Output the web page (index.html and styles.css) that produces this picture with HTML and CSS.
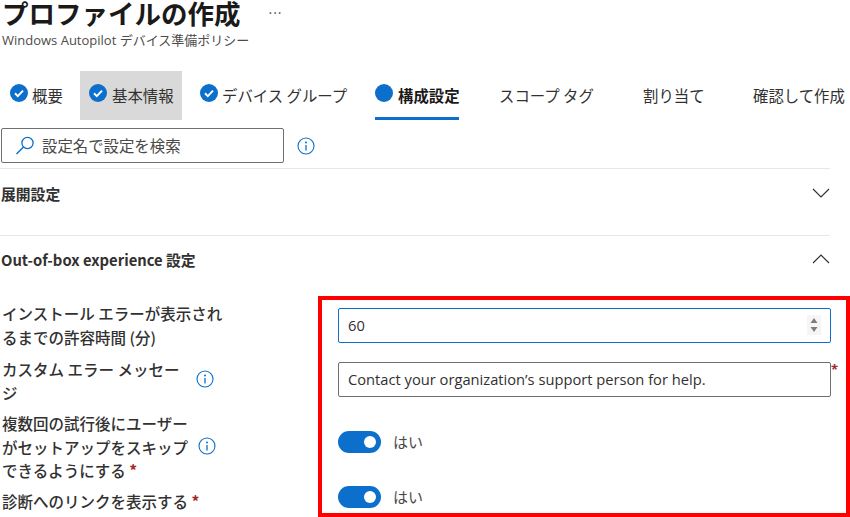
FILE: index.html
```html
<!DOCTYPE html>
<html lang="ja">
<head>
<meta charset="utf-8">
<title>プロファイルの作成</title>
<link rel="stylesheet" href="styles.css">
</head>
<body>
<div class="page">
  <header class="head">
    <div class="title-row"><h1>プロファイルの作成</h1><span class="more">···</span></div>
    <div class="sub">Windows Autopilot デバイス準備ポリシー</div>
  </header>
  <nav class="tabs">
    <div class="tab t1"><svg class="ck" viewBox="0 0 18 18"><circle cx="9" cy="9" r="9" fill="#0b6fcb"/><path d="M5 9.3l2.8 2.8L13 6.6" fill="none" stroke="#fff" stroke-width="2"/></svg><span>概要</span></div>
    <div class="tab t2 hover"><svg class="ck" viewBox="0 0 18 18"><circle cx="9" cy="9" r="9" fill="#0b6fcb"/><path d="M5 9.3l2.8 2.8L13 6.6" fill="none" stroke="#fff" stroke-width="2"/></svg><span>基本情報</span></div>
    <div class="tab t3"><svg class="ck" viewBox="0 0 18 18"><circle cx="9" cy="9" r="9" fill="#0b6fcb"/><path d="M5 9.3l2.8 2.8L13 6.6" fill="none" stroke="#fff" stroke-width="2"/></svg><span>デバイス グループ</span></div>
    <div class="tab t4 active"><span class="dot"></span><span>構成設定</span></div>
    <div class="tab t5"><span>スコープ タグ</span></div>
    <div class="tab t6"><span>割り当て</span></div>
    <div class="tab t7"><span>確認して作成</span></div>
  </nav>
  <div class="search-row">
    <div class="search">
      <svg class="mag" viewBox="0 0 20 20"><circle cx="12.5" cy="7" r="5.6" fill="none" stroke="#0b6fcb" stroke-width="1.3"/><path d="M8.5 11L1.5 18" stroke="#0b6fcb" stroke-width="1.5" fill="none"/></svg>
      <span>設定名で設定を検索</span>
    </div>
    <svg class="info" viewBox="0 0 18 18"><circle cx="9" cy="9" r="8" fill="none" stroke="#0b6fcb" stroke-width="1.1"/><circle cx="9" cy="5.5" r="1" fill="#0b6fcb"/><path d="M9 8v5.5" stroke="#0b6fcb" stroke-width="1.3"/></svg>
  </div>
  <section class="acc acc1">
    <span>展開設定</span>
    <svg class="chev" viewBox="0 0 18 10"><path d="M1 1l8 8 8-8" fill="none" stroke="#333" stroke-width="1.2"/></svg>
  </section>
  <section class="acc acc2">
    <span>Out-of-box experience 設定</span>
    <svg class="chev" viewBox="0 0 18 10"><path d="M1 9l8-8 8 8" fill="none" stroke="#333" stroke-width="1.2"/></svg>
  </section>
  <div class="form">
    <div class="row r1">
      <div class="label">インストール エラーが表示されるまでの許容時間 (分)</div>
      <div class="field num"><span>60</span><svg class="spin" viewBox="0 0 14 20"><rect width="14" height="20" fill="#f5f5f5"/><path d="M7 3l3.500 5h-7z M3.500 12h7l-3.500 5z" fill="#7d7d7d"/></svg></div>
    </div>
    <div class="row r2">
      <div class="label">カスタム エラー メッセージ</div>
      <svg class="info" viewBox="0 0 18 18"><circle cx="9" cy="9" r="8" fill="none" stroke="#0b6fcb" stroke-width="1.1"/><circle cx="9" cy="5.500" r="1" fill="#0b6fcb"/><path d="M9 8v5.500" stroke="#0b6fcb" stroke-width="1.3"/></svg>
      <div class="field text"><span>Contact your organization’s support person for help.</span><b class="req">*</b></div>
    </div>
    <div class="row r3">
      <div class="label">複数回の試行後にユーザーがセットアップをスキップできるようにする <b class="req">*</b></div>
      <svg class="info" viewBox="0 0 18 18"><circle cx="9" cy="9" r="8" fill="none" stroke="#0b6fcb" stroke-width="1.1"/><circle cx="9" cy="5.500" r="1" fill="#0b6fcb"/><path d="M9 8v5.500" stroke="#0b6fcb" stroke-width="1.3"/></svg>
      <div class="toggle-wrap"><span class="toggle"></span><span class="yes">はい</span></div>
    </div>
    <div class="row r4">
      <div class="label">診断へのリンクを表示する <b class="req">*</b></div>
      <div class="toggle-wrap"><span class="toggle"></span><span class="yes">はい</span></div>
    </div>
  </div>
  <div class="redbox"></div>
</div>
</body>
</html>
```
FILE: styles.css
```css
* { box-sizing: border-box; }
html, body { margin: 0; padding: 0; background: #fff; }
body { width: 850px; height: 517px; overflow: hidden; font-family: "Noto Sans CJK JP", "Open Sans", sans-serif; color: #323130; }
.page { position: relative; width: 850px; height: 517px; overflow: hidden; }

.head { height: 71px; padding-left: 2px; }
.title-row { display: flex; align-items: center; height: 26px; }
h1 { margin: 0; font-size: 26.500px; line-height: 26px; font-weight: 700; color: #1b1a19; }
.more { margin-left: 28px; font-size: 14px; letter-spacing: 1px; color: #555; line-height: 14px; font-family: "Open Sans", sans-serif; }
.sub { margin-top: 4px; font-size: 13px; line-height: 20px; color: #4d4c4b; font-family: "Open Sans", "Noto Sans CJK JP", sans-serif; }

.tabs { display: flex; height: 49px; font-size: 15.400px; color: #323130; }
.tab { display: flex; align-items: center; height: 49px; flex: none; padding-bottom: 2px; }
.tab span { white-space: nowrap; }
.ck { width: 18px; height: 18px; margin-right: 4px; margin-top: -3px; flex: none; }
.t1 { width: 80px; padding-left: 10px; }
.t2 { width: 102px; padding-left: 9px; background: #d9d9d9; }
.t2 .ck { margin-right: 5px; }
.t3 { width: 193px; padding-left: 18px; }
.t4 { width: 84px; position: relative; font-weight: 700; color: #1b1a19; }
.t4::after { content: ""; position: absolute; left: 0; right: 0; bottom: 0; height: 3px; background: #0b6fcb; }
.dot { width: 18px; height: 18px; border-radius: 50%; background: #0b6fcb; margin-right: 5px; margin-top: -3px; flex: none; }
.t5 { width: 144px; padding-left: 40px; }
.t6 { width: 150px; padding-left: 40px; }

.search-row { display: flex; align-items: center; height: 35px; margin-top: 8px; padding-left: 1px; }
.search { width: 283px; height: 35px; border: 1px solid #6f6f6f; border-radius: 2px; display: flex; align-items: center; padding-left: 13px; padding-bottom: 2px; font-size: 15.400px; color: #4a4948; }
.mag { width: 20px; height: 20px; margin-right: 7px; margin-top: 2px; }
.info { width: 18px; height: 18px; flex: none; }
.search-row .info { margin-left: 13px; }

.acc { width: 830px; padding-left: 1px; display: flex; justify-content: space-between; align-items: center; border-top: 1px solid #e6e6e6; font-size: 14.800px; font-weight: 700; color: #323130; }
.acc1 { height: 67px; margin-top: 5px; padding-bottom: 18px; }
.acc2 { height: 56px; padding-bottom: 8px; }
.chev { width: 18px; height: 10px; }
.acc1 .chev { margin-top: -1px; }
.acc2 .chev { margin-top: -2px; }

.form { display: flex; flex-direction: column; padding-left: 2px; }
.row { display: grid; grid-template-columns: 195px 141px 1fr; align-items: start; }
.label { grid-column: 1; font-size: 15.500px; font-weight: 500; line-height: 23.500px; color: #323130; }
.row .info { grid-column: 2; margin-left: -1px; }
.row > .field, .row > .toggle-wrap { grid-column: 3; }
.r1 { height: 58px; padding-top: 11px; }
.r1 .label { width: 225px; grid-column: 1 / 3; }
.r2 { height: 56px; padding-top: 9px; }
.r2 .label { width: 182px; }
.r2 .info { margin-top: 12px; }
.r3 { height: 77px; padding-top: 7px; }
.r3 .label { width: 190px; }
.r3 .info { margin-top: 25px; margin-left: 1px; }
.r4 { padding-top: 8px; }
.r4 .label { grid-column: 1 / 3; white-space: nowrap; }

.field { width: 493px; height: 35px; display: flex; align-items: center; justify-content: space-between; font-size: 14.700px; padding: 0 9px 2px; border-radius: 2px; font-family: "Open Sans", "Noto Sans CJK JP", sans-serif; position: relative; }
.num { border: 1.500px solid #0b6fcb; margin-top: 6px; }
.text { border: 1px solid #6f6f6f; margin-top: 4px; }
.spin { width: 14px; height: 20px; margin-right: 0; margin-top: 1px; }
.req { color: #a4262c; font-weight: 700; }
.text .req { position: absolute; right: -8px; top: -3px; font-size: 13px; }

.toggle-wrap { display: flex; align-items: center; gap: 12px; font-size: 15px; color: #4a4948; height: 24px; }
.yes { padding-bottom: 2px; }
.r3 .toggle-wrap { margin-top: 18px; }
.r4 .toggle-wrap { margin-top: -5px; }
.toggle { width: 43px; height: 22px; border-radius: 11px; background: #0b6fcb; position: relative; flex: none; }
.toggle::after { content: ""; position: absolute; right: 5px; top: 5px; width: 12px; height: 12px; border-radius: 50%; background: #fff; }

.redbox { position: absolute; left: 318px; top: 296px; width: 532px; height: 221px; border: 4px solid #f00; pointer-events: none; }
```
